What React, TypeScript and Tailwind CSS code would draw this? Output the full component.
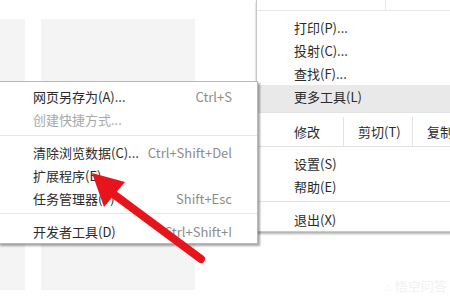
import type { ReactNode } from 'react'

const font = "font-['Noto_Sans_CJK_SC','Noto_Sans',sans-serif]"

function SubItem({ label, shortcut, disabled }: { label: string; shortcut?: string; disabled?: boolean }) {
  return (
    <div className="flex h-[23px] items-center justify-between pl-[32px] pr-[25px]">
      <span className={disabled ? 'text-[#a8a8a8]' : 'text-[#2a2a2a]'}>{label}</span>
      {shortcut && <span className="text-[#8c8c8c]">{shortcut}</span>}
    </div>
  )
}

function MainItem({ children, active }: { children: ReactNode; active?: boolean }) {
  return (
    <div className={`flex items-center pl-[37px] text-[#2a2a2a] ${active ? 'h-[27px] bg-[#e9e9e9] pb-[4px]' : 'h-[23px]'}`}>
      {children}
    </div>
  )
}

export default function App() {
  return (
    <div className={`relative h-[300px] w-[450px] overflow-hidden bg-white text-[13px] ${font}`}>
      {/* page content behind the menus */}
      <div className="flex gap-[16px] pt-[19px]">
        <div className="h-[271px] w-[25px] bg-[#f4f4f4]" />
        <div className="h-[271px] w-[154px] bg-[#f4f4f4]" />
      </div>

      {/* watermark */}
      <div className="absolute left-[384px] top-[276px] flex items-center gap-1 text-[13px] text-[#f1f1f1]">
        <span className="text-[11px]">⌂</span>
        <span>悟空问答</span>
      </div>

      {/* main browser menu */}
      <div className="absolute left-[256px] top-0 w-[220px] border-l border-b border-[#c9c9c9] bg-white shadow-[0_2px_2px_rgba(0,0,0,0.3)]">
        <div className="flex h-[11px] border-b border-[#e6e6e6]">
          <div className="w-[129px] border-r border-[#e6e6e6]" />
        </div>
        <div className="pt-[5px]">
          <MainItem>打印(P)...</MainItem>
          <MainItem>投射(C)...</MainItem>
          <MainItem>查找(F)...</MainItem>
          <MainItem active>更多工具(L)</MainItem>
        </div>
        <div className="flex h-[35px] items-center border-y border-[#e3e3e3] pt-[4px] text-[#2a2a2a]">
          <div className="flex h-full w-[86px] items-center pl-[37px]">修改</div>
          <div className="flex h-full w-[70px] items-center border-x border-[#e3e3e3] pl-[14px]">剪切(T)</div>
          <div className="flex h-full items-center pl-[14px]">复制</div>
        </div>
        <div className="pt-[5px]">
          <MainItem>设置(S)</MainItem>
          <MainItem>帮助(E)</MainItem>
        </div>
        <div className="my-[3px] border-t border-[#e3e3e3]" />
        <div className="pt-[3px]">
          <MainItem>退出(X)</MainItem>
        </div>
      </div>

      {/* "more tools" submenu */}
      <div className="absolute left-[-2px] top-[81px] w-[260px] border border-[#b9b9b9] bg-white pt-[3px] shadow-[2px_2px_2px_rgba(0,0,0,0.35)]">
        <div className="pl-[2px]">
          <SubItem label="网页另存为(A)..." shortcut="Ctrl+S" />
          <SubItem label="创建快捷方式..." disabled />
        </div>
        <div className="mt-[4px] mb-[5px] border-t border-[#e6e6e6]" />
        <div className="pl-[2px]">
          <SubItem label="清除浏览数据(C)..." shortcut="Ctrl+Shift+Del" />
          <SubItem label="扩展程序(E)" />
          <SubItem label="任务管理器(T)" shortcut="Shift+Esc" />
        </div>
        <div className="mt-[3px] mb-[6px] border-t border-[#e6e6e6]" />
        <div className="pl-[2px]">
          <SubItem label="开发者工具(D)" shortcut="Ctrl+Shift+I" />
        </div>
      </div>

      {/* red annotation arrow */}
      <svg className="absolute left-0 top-0" width="450" height="300" viewBox="0 0 450 300">
        <line x1="112" y1="193" x2="201" y2="259" stroke="#e8141b" strokeWidth="8" strokeLinecap="round" />
        <polygon points="92,173 125,182 104,207" fill="#e8141b" />
      </svg>
    </div>
  )
}
